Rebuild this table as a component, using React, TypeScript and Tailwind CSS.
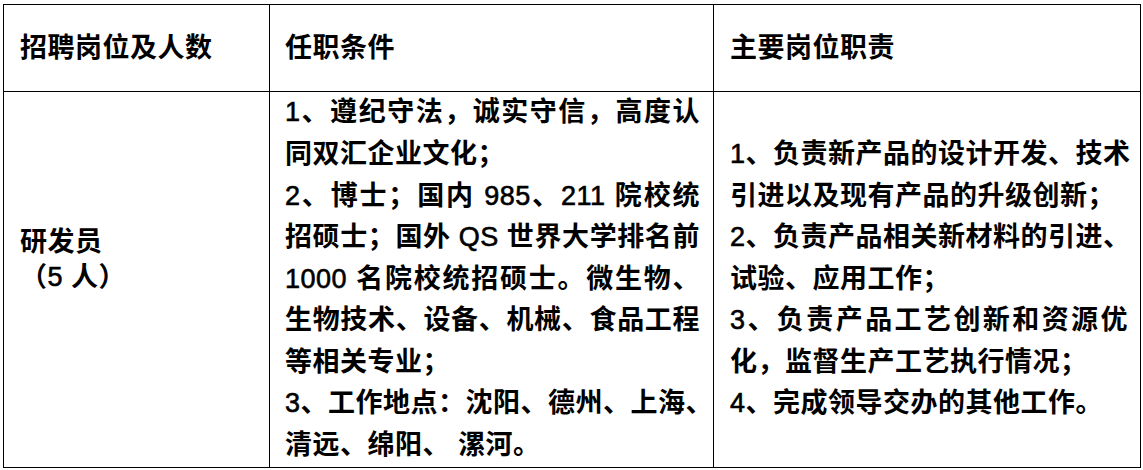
const font = "font-['Liberation_Sans','Noto_Sans_CJK_SC',sans-serif]";

type Line = { text: string; justify?: boolean };

const conditions: Line[] = [
  { text: "1、遵纪守法，诚实守信，高度认", justify: true },
  { text: "同双汇企业文化；" },
  { text: "2、博士；国内 985、211 院校统", justify: true },
  { text: "招硕士；国外 QS 世界大学排名前", justify: true },
  { text: "1000 名院校统招硕士。微生物、", justify: true },
  { text: "生物技术、设备、机械、食品工程", justify: true },
  { text: "等相关专业；" },
  { text: "3、工作地点：沈阳、德州、上海、", justify: true },
  { text: "清远、绵阳、 漯河。" },
];

const duties: Line[] = [
  { text: "1、负责新产品的设计开发、技术", justify: true },
  { text: "引进以及现有产品的升级创新；" },
  { text: "2、负责产品相关新材料的引进、", justify: true },
  { text: "试验、应用工作；" },
  { text: "3、负责产品工艺创新和资源优", justify: true },
  { text: "化，监督生产工艺执行情况；" },
  { text: "4、完成领导交办的其他工作。" },
];

// latin letters and digits: regular weight with a thin stroke, closer to the doc's Arial runs
const Txt = ({ text }: { text: string }) => (
  <>
    {text.split(/([0-9A-Za-z]+)/).map((part, i) =>
      /^[0-9A-Za-z]+$/.test(part) ? (
        <span key={i} className="font-normal [-webkit-text-stroke:0.6px_black]">{part}</span>
      ) : (
        <span key={i}>{part}</span>
      )
    )}
  </>
);

const Lines = ({ lines }: { lines: Line[] }) => (
  <div className="w-full">
    {lines.map((l, i) => (
      <div
        key={i}
        className={
          "leading-[41.6px] whitespace-pre " +
          (l.justify ? "text-justify [text-align-last:justify]" : "text-left")
        }
      >
        <Txt text={l.text} />
      </div>
    ))}
  </div>
);

const App = () => {
  return (
    <div className={`w-[1143px] h-[470px] bg-white pl-[3px] pt-[4px] text-black ${font} text-[27px] font-semibold tracking-[0.5px]`}>
      <div className="grid grid-cols-[266px_444px_427px] grid-rows-[87px_376px] border-l border-t border-black w-fit">
        {/* header */}
        <div className="border-r border-b border-black flex items-center pl-[16px]">
          招聘岗位及人数
        </div>
        <div className="border-r border-b border-black flex items-center pl-[15px]">
          任职条件
        </div>
        <div className="border-r border-b border-black flex items-center pl-[16px]">
          主要岗位职责
        </div>

        {/* body */}
        <div className="border-r border-b border-black flex flex-col justify-center pl-[16px] pb-[40px] leading-[35px]">
          <div>研发员</div>
          <div><Txt text="（5 人）" /></div>
        </div>
        <div className="border-r border-b border-black flex items-center pl-[15px] pr-[13px]">
          <Lines lines={conditions} />
        </div>
        <div className="border-r border-b border-black flex items-center pl-[16px] pr-[12px]">
          <Lines lines={duties} />
        </div>
      </div>
    </div>
  );
};

export default App;
